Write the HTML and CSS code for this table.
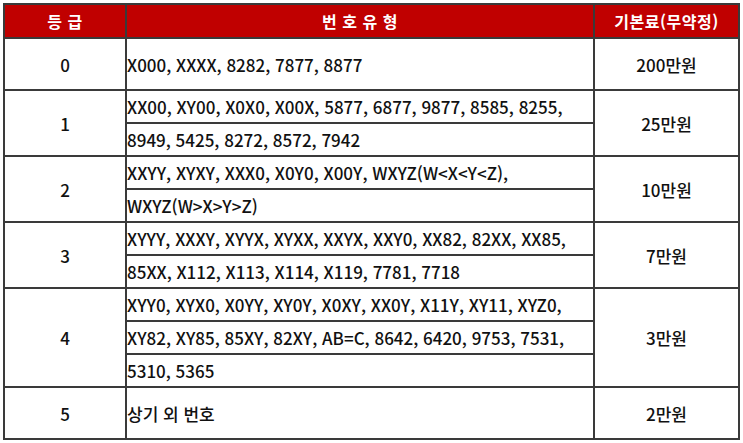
FILE: index.html
```html
<!DOCTYPE html>
<html lang="ko">
<head>
<meta charset="utf-8">
<title>번호 등급</title>
<link rel="stylesheet" href="styles.css">
</head>
<body>
<table class="grade-table">
  <colgroup>
    <col class="col-grade">
    <col class="col-type">
    <col class="col-fee">
  </colgroup>
  <thead>
    <tr class="head-row">
      <th>등 급</th>
      <th>번 호 유 형</th>
      <th>기본료(무약정)</th>
    </tr>
  </thead>
  <tbody>
    <tr class="tall">
      <td class="grade">0</td>
      <td class="type">X000, XXXX, 8282, 7877, 8877</td>
      <td class="fee">200만원</td>
    </tr>
    <tr class="sub">
      <td class="grade" rowspan="2">1</td>
      <td class="type">XX00, XY00, X0X0, X00X, 5877, 6877, 9877, 8585, 8255,</td>
      <td class="fee" rowspan="2">25만원</td>
    </tr>
    <tr class="sub">
      <td class="type">8949, 5425, 8272, 8572, 7942</td>
    </tr>
    <tr class="sub">
      <td class="grade" rowspan="2">2</td>
      <td class="type">XXYY, XYXY, XXX0, X0Y0, X00Y, WXYZ(W&lt;X&lt;Y&lt;Z),</td>
      <td class="fee" rowspan="2">10만원</td>
    </tr>
    <tr class="sub">
      <td class="type">WXYZ(W&gt;X&gt;Y&gt;Z)</td>
    </tr>
    <tr class="sub">
      <td class="grade" rowspan="2">3</td>
      <td class="type">XYYY, XXXY, XYYX, XYXX, XXYX, XXY0, XX82, 82XX, XX85,</td>
      <td class="fee" rowspan="2">7만원</td>
    </tr>
    <tr class="sub">
      <td class="type">85XX, X112, X113, X114, X119, 7781, 7718</td>
    </tr>
    <tr class="sub">
      <td class="grade" rowspan="3">4</td>
      <td class="type">XYY0, XYX0, X0YY, XY0Y, X0XY, XX0Y, X11Y, XY11, XYZ0,</td>
      <td class="fee" rowspan="3">3만원</td>
    </tr>
    <tr class="sub">
      <td class="type">XY82, XY85, 85XY, 82XY, AB=C, 8642, 6420, 9753, 7531,</td>
    </tr>
    <tr class="sub">
      <td class="type">5310, 5365</td>
    </tr>
    <tr class="tall">
      <td class="grade">5</td>
      <td class="type">상기 외 번호</td>
      <td class="fee">2만원</td>
    </tr>
  </tbody>
</table>
</body>
</html>
```
FILE: styles.css
```css
html, body {
  margin: 0;
  background: #ffffff;
}

body {
  padding: 3px 5px 0 3px;
  font-family: "Noto Sans CJK KR", "Noto Sans", sans-serif;
  color: #111111;
}

.grade-table {
  width: 735px;
  border-collapse: collapse;
  table-layout: fixed;
  border: 2px solid #3a3a3a;
}

.col-grade { width: 122px; }
.col-type { width: 468px; }
.col-fee { width: 145px; }

.grade-table th,
.grade-table td {
  border: 2px solid #3a3a3a;
  padding: 0;
  vertical-align: middle;
}

.head-row {
  height: 34px;
}

.head-row th {
  background: #c00000;
  color: #ffffff;
  font-size: 16px;
  font-weight: 700;
  text-align: center;
  letter-spacing: 0.5px;
}

.tall { height: 52px; }
.sub { height: 33px; }

.grade,
.fee {
  text-align: center;
  font-size: 17px;
  font-weight: 500;
}

.type {
  text-align: left;
  padding-left: 1px;
  font-size: 17px;
  font-weight: 500;
  white-space: nowrap;
}
```
